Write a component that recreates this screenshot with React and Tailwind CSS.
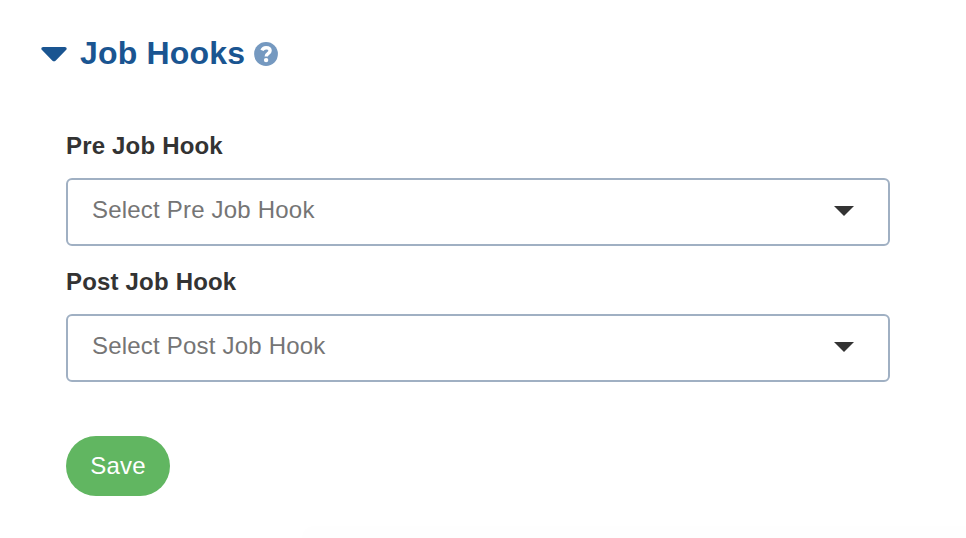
function SelectField({ label, placeholder, className }) {
  return (
    <div className={className}>
      <div className="h-[30px] text-2xl leading-[30px] font-bold tracking-[0.18px] text-[#333]">{label}</div>
      <button type="button" className="mt-[17px] flex h-[68px] w-[824px] items-center justify-between rounded-[6px] border-2 border-[#a0b0c3] bg-white pr-[34px] pb-1 pl-6 text-left">
        <span className="text-2xl tracking-[0.2px] text-[#757575]">{placeholder}</span>
        <svg viewBox="0 0 20 10" className="mt-[2px] h-[10px] w-5 text-[#333]" aria-hidden="true">
          <path d="M0 0H20L10 10Z" fill="currentColor" />
        </svg>
      </button>
    </div>
  );
}

export default function App() {
  return (
    <main className="flex h-[538px] w-[966px] flex-col overflow-hidden bg-white font-['Liberation_Sans',Arial,sans-serif]">
      <header className="flex h-[106px] items-center pl-[41px] text-[#1a5591]">
        <svg viewBox="0 0 26 15" className="mt-[2px] h-[15px] w-[26px]" aria-hidden="true">
          <path d="M2.2 0H23.8C25.6 0 26.3 1.9 25 3.1L14.8 13.5Q13 15.2 11.2 13.5L1 3.1C-0.3 1.9 0.4 0 2.2 0Z" fill="currentColor" />
        </svg>
        <h1 className="ml-[13px] text-[32px] leading-10 font-bold tracking-[0.18px]">Job Hooks</h1>
        <svg viewBox="0 0 24 24" className="mt-[2px] ml-[9px] size-6" aria-hidden="true">
          <circle cx="12" cy="12" r="11.9" fill="#7599c0" />
          <path d="M8 8.4C8.7 6.5 10.1 5.7 12.1 5.7C14.5 5.7 16.1 6.9 16.1 8.7C16.1 11.3 12.2 11.3 12.2 14.4" fill="none" stroke="#fff" strokeWidth="3.4" />
          <circle cx="12.1" cy="18.1" r="2.2" fill="#fff" />
        </svg>
      </header>
      <section className="h-[420px] shrink-0 pt-[25px] pl-[66px]">
        <SelectField label="Pre Job Hook" placeholder="Select Pre Job Hook" />
        <SelectField label="Post Job Hook" placeholder="Select Post Job Hook" className="mt-[21px]" />
        <button type="button" className="mt-[54px] flex h-[60px] w-[104px] items-center justify-center rounded-full bg-[#61b661] text-2xl tracking-[0.2px] text-white">Save</button>
      </section>
      <footer className="ml-[302px] flex-1 rounded-tl-2xl bg-[#fefefe]" />
    </main>
  );
}
